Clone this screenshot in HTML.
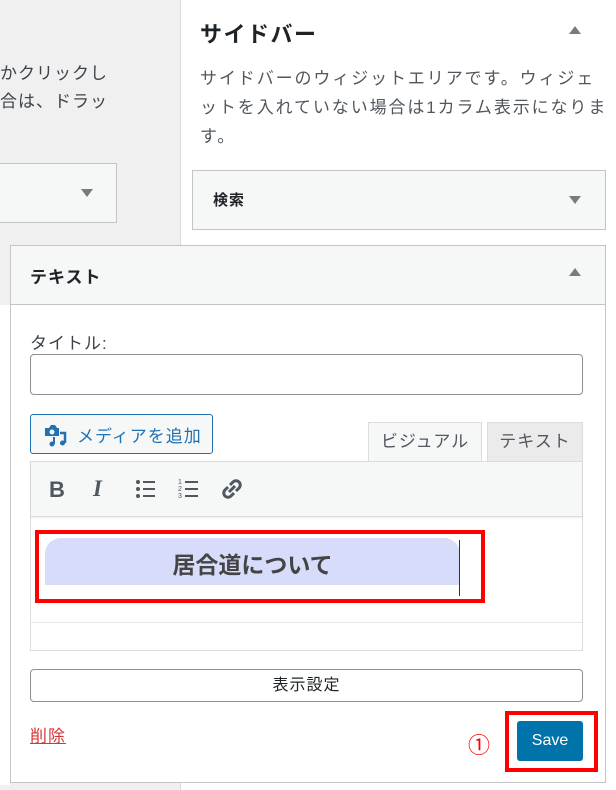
<!DOCTYPE html>
<html><head><meta charset="utf-8"><style>
*{box-sizing:border-box;margin:0;padding:0}
body{width:616px;height:790px;overflow:hidden;position:relative;background:#fff;font-family:"Liberation Sans","Noto Sans CJK JP",sans-serif;color:#1d2327}
.a{position:absolute}
.tri-d{width:0;height:0;border-left:6px solid transparent;border-right:6px solid transparent;border-top:8px solid #787c82}
.tri-u{width:0;height:0;border-left:6px solid transparent;border-right:6px solid transparent;border-bottom:8px solid #787c82}
</style></head><body>
<div class="a" style="left:0;top:0;width:181px;height:790px;background:#f0f0f1;border-right:1px solid #dcdcde"></div>
<div class="a" style="left:0;top:60px;font-size:17px;line-height:28px;letter-spacing:1px;color:#3c434a;white-space:nowrap">かクリックし<br>合は、ドラッ</div>
<div class="a" style="left:-2px;top:163px;width:119px;height:60px;background:#f6f7f7;border:1px solid #c3c4c7"></div>
<div class="a tri-d" style="left:81px;top:189px"></div>
<div class="a" style="left:0;top:305px;width:10px;height:480px;background:#fff"></div>

<div class="a" style="left:200px;top:17px;font-size:22px;font-weight:bold;letter-spacing:1.5px">サイドバー</div>
<div class="a tri-u" style="left:569px;top:26px"></div>
<div class="a" style="left:200px;top:64px;font-size:17px;line-height:29px;letter-spacing:1.9px;color:#50575e;white-space:nowrap">サイドバーのウィジットエリアです。ウィジェ<br>ットを入れていない場合は1カラム表示になりま<br>す。</div>
<div class="a" style="left:192px;top:170px;width:414px;height:60px;background:#f6f7f7;border:1px solid #c3c4c7"></div>
<div class="a" style="left:213px;top:189px;font-size:15px;font-weight:bold;letter-spacing:1px">検索</div>
<div class="a tri-d" style="left:569px;top:196px"></div>

<div class="a" style="left:10px;top:245px;width:596px;height:538px;background:#fff;border:1px solid #c3c4c7"></div>
<div class="a" style="left:11px;top:246px;width:594px;height:59px;background:#f6f7f7;border-bottom:1px solid #c3c4c7"></div>
<div class="a" style="left:30px;top:263px;font-size:17px;font-weight:bold;letter-spacing:1px">テキスト</div>
<div class="a tri-u" style="left:569px;top:268px"></div>

<div class="a" style="left:30px;top:329px;font-size:17px;letter-spacing:1px;color:#3c434a">タイトル:</div>
<div class="a" style="left:30px;top:354px;width:553px;height:41px;border:1px solid #8c8f94;border-radius:4px"></div>

<div class="a" style="left:30px;top:414px;width:183px;height:40px;border:1px solid #2271b1;border-radius:3px;background:#f6f7f7"></div>
<svg class="a" style="left:42px;top:423px" width="26" height="24" viewBox="0 0 26 24"><path d="M3 5h4l2-3h4l2 3h2v8H3z" fill="#2271b1"/><circle cx="10" cy="9" r="2.5" fill="#f6f7f7"/><path d="M18 10h5v10" stroke="#2271b1" stroke-width="2.5" fill="none"/><circle cx="20.5" cy="20" r="2.5" fill="#2271b1"/><path d="M12 14v7" stroke="#2271b1" stroke-width="2"/><circle cx="10" cy="21" r="2.5" fill="#2271b1"/></svg>
<div class="a" style="left:77px;top:422px;font-size:17px;letter-spacing:1px;color:#2271b1">メディアを追加</div>

<div class="a" style="left:368px;top:422px;width:114px;height:40px;background:#f6f7f7;border:1px solid #dcdcde;border-bottom:none;font-size:17px;letter-spacing:1px;color:#50575e;text-align:center;line-height:38px">ビジュアル</div>
<div class="a" style="left:487px;top:422px;width:96px;height:40px;background:#ebebeb;border:1px solid #dcdcde;font-size:17px;letter-spacing:1px;color:#50575e;text-align:center;line-height:38px">テキスト</div>

<div class="a" style="left:30px;top:461px;width:553px;height:190px;border:1px solid #dcdcde"></div>
<div class="a" style="left:31px;top:462px;width:551px;height:55px;background:#f6f7f7;border-bottom:1px solid #dcdcde;box-shadow:0 1px 2px rgba(0,0,0,.08)"></div>
<div class="a" style="left:49px;top:477px;font-size:22px;font-weight:bold;color:#50575e">B</div>
<div class="a" style="left:93px;top:476px;font-size:23px;font-weight:bold;font-style:italic;font-family:'Liberation Serif',serif;color:#50575e">I</div>
<svg class="a" style="left:135px;top:478px" width="22" height="22"><g fill="#50575e"><circle cx="3" cy="4" r="2"/><circle cx="3" cy="11" r="2"/><circle cx="3" cy="18" r="2"/><rect x="8" y="3" width="12" height="2"/><rect x="8" y="10" width="12" height="2"/><rect x="8" y="17" width="12" height="2"/></g></svg>
<svg class="a" style="left:178px;top:477px" width="22" height="24"><g fill="#50575e" font-size="7" font-family="Liberation Sans"><text x="0" y="7">1</text><text x="0" y="14">2</text><text x="0" y="21">3</text><rect x="7" y="4" width="13" height="2"/><rect x="7" y="11" width="13" height="2"/><rect x="7" y="18" width="13" height="2"/></g></svg>
<svg class="a" style="left:219px;top:476px" width="26" height="26" viewBox="0 0 26 26"><g fill="none" stroke="#50575e" stroke-width="3"><path d="M11 9l3-3a4 4 0 016 6l-3 3"/><path d="M15 17l-3 3a4 4 0 01-6-6l3-3"/><path d="M10 16l6-6"/></g></svg>

<div class="a" style="left:45px;top:538px;width:415px;height:47px;background:#d6dcf9;border-radius:16px 16px 0 0"></div>
<div class="a" style="left:45px;top:546px;width:415px;text-align:center;font-size:23px;font-weight:bold;color:#444">居合道について</div>
<div class="a" style="left:459px;top:540px;width:1px;height:56px;background:#333"></div>
<div class="a" style="left:35px;top:530px;width:450px;height:73px;border:4px solid #f00"></div>
<div class="a" style="left:31px;top:622px;width:551px;height:1px;background:#e8e8e8"></div>

<div class="a" style="left:30px;top:669px;width:553px;height:33px;border:1px solid #8c8f94;border-radius:4px;text-align:center;font-size:16px;letter-spacing:1px;line-height:31px;color:#1d2327">表示設定</div>
<div class="a" style="left:30px;top:722px;font-size:17px;letter-spacing:1px;color:#d63638;text-decoration:underline">削除</div>
<div class="a" style="left:468px;top:728px;font-size:22px;color:#f00">①</div>
<div class="a" style="left:517px;top:721px;width:66px;height:40px;background:#0073aa;border-radius:3px;color:#fff;font-size:16px;text-align:center;line-height:40px">Save</div>
<div class="a" style="left:505px;top:711px;width:93px;height:61px;border:4px solid #f00"></div>
</body></html>
